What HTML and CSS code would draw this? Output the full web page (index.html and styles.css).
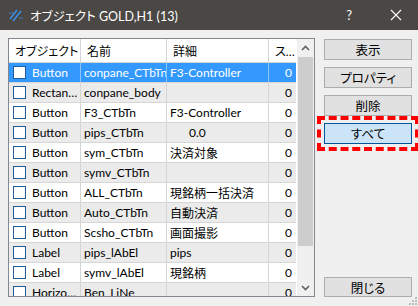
FILE: index.html
```html
<!DOCTYPE html>
<html lang="ja">
<head>
  <meta charset="UTF-8">
  <title>オブジェクト GOLD,H1 (13)</title>
  <link rel="stylesheet" href="styles.css">
</head>
<body>
  <div class="window">
    <div class="titlebar">
      <svg class="app-icon" width="16" height="16" viewBox="0 0 16 16">
        <path d="M2 12 L9 3 M5 14 L13 4" stroke="#3a8ee6" stroke-width="1.6" fill="none"/>
        <path d="M1 6 L5 6 M11 11 L15 11" stroke="#3a8ee6" stroke-width="1.2" stroke-dasharray="1.5 1" fill="none"/>
      </svg>
      <span class="title">オブジェクト GOLD,H1 (13)</span>
      <span class="help">?</span>
      <svg class="close" width="12" height="12" viewBox="0 0 12 12">
        <path d="M1 1 L11 11 M11 1 L1 11" stroke="#ffffff" stroke-width="1.1"/>
      </svg>
    </div>

    <div class="content">
      <div class="list">
        <div class="grid">
          <div class="row head">
            <div class="cell">オブジェクト</div>
            <div class="cell">名前</div>
            <div class="cell">詳細</div>
            <div class="cell">ス…</div>
          </div>
          <div class="row selected">
            <div class="cell"><span class="check"></span>Button</div>
            <div class="cell">conpane_CTbTn</div>
            <div class="cell">F3-Controller</div>
            <div class="cell num">0</div>
          </div>
          <div class="row">
            <div class="cell"><span class="check"></span><span class="clip">Rectangle Label</span></div>
            <div class="cell">conpane_body</div>
            <div class="cell"></div>
            <div class="cell num">0</div>
          </div>
          <div class="row">
            <div class="cell"><span class="check"></span>Button</div>
            <div class="cell">F3_CTbTn</div>
            <div class="cell">F3-Controller</div>
            <div class="cell num">0</div>
          </div>
          <div class="row">
            <div class="cell"><span class="check"></span>Button</div>
            <div class="cell">pips_CTbTn</div>
            <div class="cell indent">0.0</div>
            <div class="cell num">0</div>
          </div>
          <div class="row">
            <div class="cell"><span class="check"></span>Button</div>
            <div class="cell">sym_CTbTn</div>
            <div class="cell">決済対象</div>
            <div class="cell num">0</div>
          </div>
          <div class="row">
            <div class="cell"><span class="check"></span>Button</div>
            <div class="cell">symv_CTbTn</div>
            <div class="cell"></div>
            <div class="cell num">0</div>
          </div>
          <div class="row">
            <div class="cell"><span class="check"></span>Button</div>
            <div class="cell">ALL_CTbTn</div>
            <div class="cell">現銘柄一括決済</div>
            <div class="cell num">0</div>
          </div>
          <div class="row">
            <div class="cell"><span class="check"></span>Button</div>
            <div class="cell">Auto_CTbTn</div>
            <div class="cell">自動決済</div>
            <div class="cell num">0</div>
          </div>
          <div class="row">
            <div class="cell"><span class="check"></span>Button</div>
            <div class="cell">Scsho_CTbTn</div>
            <div class="cell">画面撮影</div>
            <div class="cell num">0</div>
          </div>
          <div class="row">
            <div class="cell"><span class="check"></span>Label</div>
            <div class="cell">pips_lAbEl</div>
            <div class="cell">pips</div>
            <div class="cell num">0</div>
          </div>
          <div class="row">
            <div class="cell"><span class="check"></span>Label</div>
            <div class="cell">symv_lAbEl</div>
            <div class="cell">現銘柄</div>
            <div class="cell num">0</div>
          </div>
          <div class="row">
            <div class="cell"><span class="check"></span><span class="clip">Horizontal Line</span></div>
            <div class="cell">Ben_LiNe</div>
            <div class="cell"></div>
            <div class="cell num">0</div>
          </div>
        </div>
        <div class="scrollbar">
          <div class="arrow">
            <svg width="9" height="6" viewBox="0 0 9 6"><path d="M1 5 L4.5 1.5 L8 5" stroke="#606060" stroke-width="1.6" fill="none"/></svg>
          </div>
          <div class="thumb"></div>
          <div class="track"></div>
          <div class="arrow">
            <svg width="9" height="6" viewBox="0 0 9 6"><path d="M1 1 L4.5 4.5 L8 1" stroke="#606060" stroke-width="1.6" fill="none"/></svg>
          </div>
        </div>
      </div>

      <div class="side">
        <button class="btn">表示</button>
        <button class="btn">プロパティ</button>
        <button class="btn">削除</button>
        <button class="btn focused">すべて</button>
        <button class="btn last">閉じる</button>
      </div>
    </div>

    <svg class="grip" width="9" height="9" viewBox="0 0 9 9">
      <rect x="7" y="1" width="2" height="2" fill="#bcbcbc"/>
      <rect x="4" y="4" width="2" height="2" fill="#bcbcbc"/>
      <rect x="7" y="4" width="2" height="2" fill="#bcbcbc"/>
      <rect x="1" y="7" width="2" height="2" fill="#bcbcbc"/>
      <rect x="4" y="7" width="2" height="2" fill="#bcbcbc"/>
      <rect x="7" y="7" width="2" height="2" fill="#bcbcbc"/>
    </svg>
  </div>
</body>
</html>
```

FILE: styles.css
```css
/* dialog window */
body {
  margin: 0;
  font-family: Lato, "Noto Sans CJK JP", sans-serif;
  font-size: 12px;
  font-feature-settings: "palt";
  color: #000;
}
.window {
  position: relative;
  width: 418px;
  height: 306px;
  background: #f0f0f0;
  overflow: hidden;
}
.titlebar {
  height: 30px;
  background: #4a4744;
  color: #fff;
  display: flex;
  align-items: center;
  padding-left: 8px;
}
.app-icon {
  margin-right: 6px;
}
.title {
  flex: 1;
  font-size: 12.5px;
}
.help {
  font-size: 13px;
  margin-right: 38px;
}
.close {
  margin-right: 16px;
}

/* main area */
.content {
  display: flex;
  padding: 8px 6px 0 8px;
  gap: 9px;
}
.list {
  width: 306px;
  height: 257px;
  border: 1px solid #828790;
  background: #fff;
  display: flex;
  overflow: hidden;
}
.grid {
  width: 288px;
  overflow: hidden;
}
.row {
  display: grid;
  grid-template-columns: 72px 86px 102px 28px;
  height: 20px;
  border-bottom: 1px solid #d6d6d6;
  box-sizing: border-box;
}
.row:nth-child(odd) {
  background: #ebebeb;
}
.row.head {
  height: 24px;
  background: #fff;
}
.cell {
  display: flex;
  align-items: center;
  padding-left: 3px;
  border-right: 1px solid #d6d6d6;
  white-space: nowrap;
  overflow: hidden;
  min-width: 0;
}
.cell:last-child {
  border-right: none;
}
.head .cell {
  padding-left: 6px;
}
.num {
  justify-content: flex-end;
  padding-right: 5px;
}
.indent {
  padding-left: 22px;
}
.clip {
  overflow: hidden;
  text-overflow: ellipsis;
  min-width: 0;
}
.check {
  flex: none;
  width: 11px;
  height: 11px;
  border: 1px solid #1f5c99;
  background: #fff;
  margin: 0 6px 0 1px;
}
.row.selected {
  background: #3399ff;
  color: #fff;
}
.selected .cell {
  border-right-color: #8cc4fa;
}

/* scrollbar */
.scrollbar {
  width: 17px;
  margin-left: 1px;
  background: #f0f0f0;
  display: flex;
  flex-direction: column;
}
.arrow {
  height: 17px;
  display: flex;
  align-items: center;
  justify-content: center;
}
.thumb {
  height: 189px;
  margin: 1px 1px 0 1px;
  background: #cdcdcd;
}
.track {
  flex: 1;
}

/* side buttons */
.side {
  width: 88px;
  height: 259px;
  display: flex;
  flex-direction: column;
  gap: 7px;
  padding-top: 1px;
  box-sizing: border-box;
}
.btn {
  height: 21px;
  background: #e1e1e1;
  border: 1px solid #adadad;
  font-family: inherit;
  font-size: 12.5px;
  font-feature-settings: "palt";
  padding: 0;
  color: #000;
}
.btn.focused {
  background: #cce4f7;
  border-color: #005499;
  outline: 4px dashed #ff0000;
  outline-offset: 3px;
}
.btn.last {
  margin-top: auto;
  height: 20px;
}
.grip {
  position: absolute;
  right: 1px;
  bottom: 1px;
}
```
